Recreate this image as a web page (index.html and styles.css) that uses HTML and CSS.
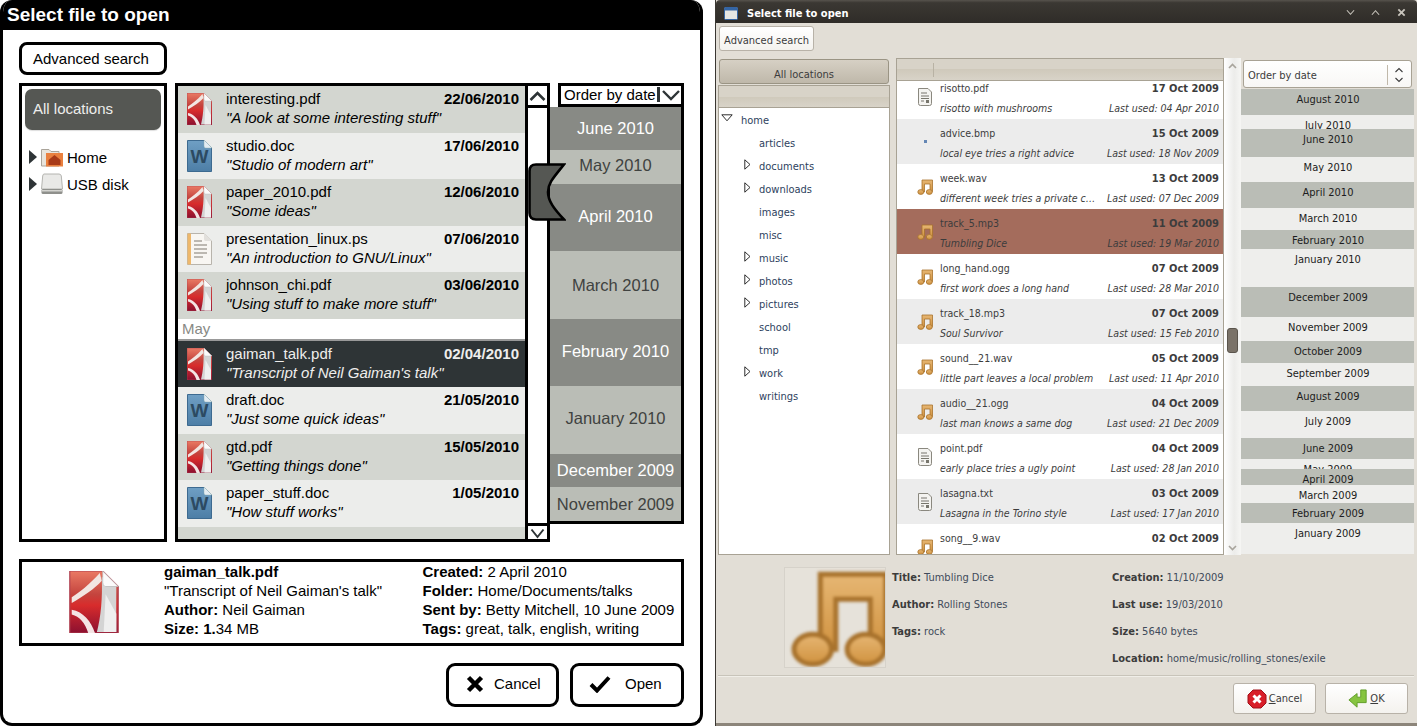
FILE: index.html
```html
<!DOCTYPE html>
<html lang="en">
<head>
<meta charset="utf-8">
<title>Select file to open</title>
<link rel="stylesheet" href="styles.css">
</head>
<body>
<svg class="defs" aria-hidden="true">
  <defs>
    <linearGradient id="g-red" x1="0" y1="0" x2="0" y2="1"><stop offset="0" stop-color="#ea7a64"/><stop offset=".38" stop-color="#c4443e"/><stop offset=".55" stop-color="#d82c2c"/><stop offset="1" stop-color="#8c1030"/></linearGradient>
    <linearGradient id="g-blue" x1="0" y1="0" x2="0" y2="1"><stop offset="0" stop-color="#6f9fc4"/><stop offset="1" stop-color="#4d7ea6"/></linearGradient>
    <linearGradient id="g-note" x1="0" y1="0" x2="0" y2="1"><stop offset="0" stop-color="#e6b673"/><stop offset="1" stop-color="#d0923f"/></linearGradient>
    <symbol id="pdf" viewBox="0 0 25 32">
      <path d="M0 0H17L25 8V32H0Z" fill="url(#g-red)" stroke="#b04050" stroke-width=".6"/>
      <path d="M15.500 1C10 7 5 11 1 13.500V16.500C7 13 13 9 16.500 5Z" fill="#f2e6e2"/>
      <path d="M1 20C7 21 11 26 13 32H9.500C8 27 5 23.500 1 22.500Z" fill="#f4e4e4"/>
      <path d="M16.500 3L24 8V31.500H14C16 24 17 14 16.500 3Z" fill="#d4d4d4"/>
      <path d="M18.500 12L24 22V31.500H17.500Z" fill="#efefef"/>
      <path d="M17 0L25 8H18.500Q17 8 17 6Z" fill="#fbfbfb" stroke="#bbb" stroke-width=".4"/>
    </symbol>
    <symbol id="doc" viewBox="0 0 25 32">
      <path d="M.5.500H17L24.500 8V31.500H.5Z" fill="url(#g-blue)" stroke="#3d6a90"/>
      <path d="M17 0L25 8H18.500Q17 8 17 6Z" fill="#e4edf3" stroke="#8aa" stroke-width=".4"/>
      <text x="12.500" y="23" class="doc-w">W</text>
    </symbol>
    <symbol id="ps" viewBox="0 0 25 32">
      <path d="M.5.500H17L24.500 8V31.500H.5Z" fill="#f8f6f2" stroke="#b8b4ac"/>
      <path d="M.5.500H4V31.500H.5Z" fill="#eeb86c"/>
      <path d="M7 8H15M7 12H20M7 16H20M7 20H20M7 24H16" stroke="#a8a49c" stroke-width="1.300"/>
      <path d="M17 0L25 8H18.500Q17 8 17 6Z" fill="#e2e0dc"/>
    </symbol>
    <symbol id="note" viewBox="0 0 16 16">
      <path d="M5 1H15.500V12.500H13V5H7.500V13H5Z" fill="url(#g-note)" stroke="#a8722c" stroke-width=".8"/>
      <ellipse cx="3.800" cy="13" rx="3" ry="2.400" fill="url(#g-note)" stroke="#a8722c" stroke-width=".8"/>
      <ellipse cx="12.300" cy="13" rx="3" ry="2.400" fill="url(#g-note)" stroke="#a8722c" stroke-width=".8"/>
    </symbol>
    <symbol id="txt" viewBox="0 0 16 18">
      <path d="M1.500.5H11L14.500 4V15.500Q14.500 17.500 12.500 17.500H3.500Q1.500 17.500 1.500 15.500Z" fill="#f4f3f0" stroke="#8a887f"/>
      <path d="M4 5H10M4 8H12M4 10.500H12M4 13H7" stroke="#77756c" stroke-width="1.100"/>
      <path d="M9 12H12V15H9Z" fill="#77756c"/>
    </symbol>
  </defs>
</svg>
<main class="desk">

  <section class="mock">
    <header class="mock-title">Select file to open</header>
    <div class="mock-body">
      <button class="mock-adv">Advanced search</button>
      <div class="mock-main">
        <aside class="mock-places">
          <div class="mock-all">All locations</div>
          <div class="mock-tree">
            <div class="mock-node">
              <i class="tri"></i>
              <svg class="node-icon" viewBox="0 0 22 20"><path d="M.5 2.500H8L10 4.500H18V19H.5Z" fill="#e8e4dc" stroke="#aaa49a"/><rect x="5" y="6" width="17" height="13.500" fill="#e9803f"/><path d="M7.500 13L13.500 8L19.500 13V18H7.500Z" fill="#a83a18"/></svg>
              <span>Home</span>
            </div>
            <div class="mock-node">
              <i class="tri"></i>
              <svg class="node-icon" viewBox="0 0 22 22"><path d="M3 1H18Q20 1 20.300 3L21.500 16H.5L1.700 3Q2 1 3 1Z" fill="#e9e9e7" stroke="#b4b4b0"/><rect x=".5" y="16" width="21" height="5" rx="1.500" fill="#8f908c"/><rect x="1" y="17" width="20" height="1.500" fill="#d4d4d0"/></svg>
              <span>USB disk</span>
            </div>
          </div>
        </aside>

        <div class="mock-files">
          <div class="mock-list">
            <div class="frow odd"><svg class="ficon"><use href="#pdf"/></svg><div class="ftext"><div class="fline"><span>interesting.pdf</span><b>22/06/2010</b></div><em>"A look at some interesting stuff"</em></div></div>
            <div class="frow even"><svg class="ficon"><use href="#doc"/></svg><div class="ftext"><div class="fline"><span>studio.doc</span><b>17/06/2010</b></div><em>"Studio of modern art"</em></div></div>
            <div class="frow odd"><svg class="ficon"><use href="#pdf"/></svg><div class="ftext"><div class="fline"><span>paper_2010.pdf</span><b>12/06/2010</b></div><em>"Some ideas"</em></div></div>
            <div class="frow even"><svg class="ficon"><use href="#ps"/></svg><div class="ftext"><div class="fline"><span>presentation_linux.ps</span><b>07/06/2010</b></div><em>"An introduction to GNU/Linux"</em></div></div>
            <div class="frow odd"><svg class="ficon"><use href="#pdf"/></svg><div class="ftext"><div class="fline"><span>johnson_chi.pdf</span><b>03/06/2010</b></div><em>"Using stuff to make more stuff"</em></div></div>
            <div class="fhead">May</div>
            <div class="frow sel"><svg class="ficon"><use href="#pdf"/></svg><div class="ftext"><div class="fline"><span>gaiman_talk.pdf</span><b>02/04/2010</b></div><em>"Transcript of Neil Gaiman's talk"</em></div></div>
            <div class="frow even"><svg class="ficon"><use href="#doc"/></svg><div class="ftext"><div class="fline"><span>draft.doc</span><b>21/05/2010</b></div><em>"Just some quick ideas"</em></div></div>
            <div class="frow odd"><svg class="ficon"><use href="#pdf"/></svg><div class="ftext"><div class="fline"><span>gtd.pdf</span><b>15/05/2010</b></div><em>"Getting things done"</em></div></div>
            <div class="frow even"><svg class="ficon"><use href="#doc"/></svg><div class="ftext"><div class="fline"><span>paper_stuff.doc</span><b>1/05/2010</b></div><em>"How stuff works"</em></div></div>
            <div class="ffill"></div>
          </div>
          <div class="mock-scroll">
            <div class="mock-arrow top"><svg viewBox="0 0 19 12"><path d="M2.500 10L9.500 3L16.500 10" fill="none" stroke="#2e3436" stroke-width="2.600"/></svg></div>
            <div class="mock-track"></div>
            <div class="mock-arrow bottom"><svg viewBox="0 0 19 12"><path d="M3.500 2.500L9.500 10L15.500 2.500" fill="none" stroke="#2e3436" stroke-width="2"/></svg></div>
          </div>
          <svg class="mock-handle" viewBox="0 0 38 58"><path d="M8 1.500H36C26 14 20 20 20 29C20 38 26 46 36 56.500H8Q1.500 56.500 1.500 50V8Q1.500 1.500 8 1.500Z" fill="#555753" stroke="#000" stroke-width="2.600"/></svg>
        </div>

        <div class="mock-dates">
          <div class="mock-sort"><span>Order by date</span><i class="sort-bar"></i><svg viewBox="0 0 20 12"><path d="M2 2L10 10L18 2" fill="none" stroke="#2e3436" stroke-width="2.400"/></svg></div>
          <div class="mock-months">
            <div class="mband dark" style="height:43px">June 2010</div>
            <div class="mband light up" style="height:34px">May 2010</div>
            <div class="mband dark up-sm" style="height:67px">April 2010</div>
            <div class="mband light" style="height:68px">March 2010</div>
            <div class="mband dark up-sm" style="height:67px">February 2010</div>
            <div class="mband light up" style="height:68px">January 2010</div>
            <div class="mband dark" style="height:33px">December 2009</div>
            <div class="mband light" style="height:34px">November 2009</div>
          </div>
        </div>
      </div>

      <div class="mock-detail">
        <svg class="detail-icon"><use href="#pdf"/></svg>
        <div class="detail-col one">
          <p><b>gaiman_talk.pdf</b></p>
          <p>"Transcript of Neil Gaiman's talk"</p>
          <p><b>Author:</b> Neil Gaiman</p>
          <p><b>Size: 1.</b>34 MB</p>
        </div>
        <div class="detail-col">
          <p><b>Created:</b> 2 April 2010</p>
          <p><b>Folder:</b> Home/Documents/talks</p>
          <p><b>Sent by:</b> Betty Mitchell, 10 June 2009</p>
          <p><b>Tags:</b> great, talk, english, writing</p>
        </div>
      </div>

      <div class="mock-actions">
        <button class="mock-btn cancel"><svg viewBox="0 0 18 18"><path d="M2.500 2.500L15.500 15.500M15.500 2.500L2.500 15.500" stroke="#000" stroke-width="4.500"/></svg><span>Cancel</span></button>
        <button class="mock-btn open"><svg viewBox="0 0 22 18"><path d="M2 9.500L8 15.500L20 2.500" fill="none" stroke="#000" stroke-width="4"/></svg><span>Open</span></button>
      </div>
    </div>
  </section>

  <section class="gtk">
    <header class="gtk-title">
      <svg class="gtk-appicon" viewBox="0 0 14 13"><rect x=".5" y=".5" width="13" height="12" rx="1" fill="#e6e6e2" stroke="#3465a4"/><rect x=".5" y=".5" width="13" height="3" fill="#3465a4"/></svg>
      <span class="gtk-caption">Select file to open</span>
      <div class="gtk-controls">
        <svg viewBox="0 0 10 7"><path d="M1 1L5 5.500L9 1" fill="none" stroke="#c8c4bc" stroke-width="1.200"/></svg>
        <svg viewBox="0 0 10 7"><path d="M1 6L5 1.500L9 6" fill="none" stroke="#c8c4bc" stroke-width="1.200"/></svg>
        <svg viewBox="0 0 10 10"><path d="M1.500 1.500L8.500 8.500M8.500 1.500L1.500 8.500" stroke="#c8c4bc" stroke-width="2"/></svg>
      </div>
    </header>
    <div class="gtk-body">
      <button class="gtk-adv">Advanced search</button>
      <div class="gtk-main">
        <aside class="gtk-places">
          <div class="gtk-all">All locations</div>
          <div class="gtk-tree">
            <div class="gtk-colhead"></div>
            <div class="tnode root"><svg viewBox="0 0 12 8"><path d="M.8.800H11.200L6 6.800Z" fill="none" stroke="#2e2e2e"/></svg>home</div>
            <div class="tnode">articles</div>
            <div class="tnode"><svg viewBox="0 0 7 11"><path d="M.8.800L6 5.500L.8 10.200Z" fill="none" stroke="#2e2e2e"/></svg>documents</div>
            <div class="tnode"><svg viewBox="0 0 7 11"><path d="M.8.800L6 5.500L.8 10.200Z" fill="none" stroke="#2e2e2e"/></svg>downloads</div>
            <div class="tnode">images</div>
            <div class="tnode">misc</div>
            <div class="tnode"><svg viewBox="0 0 7 11"><path d="M.8.800L6 5.500L.8 10.200Z" fill="none" stroke="#2e2e2e"/></svg>music</div>
            <div class="tnode"><svg viewBox="0 0 7 11"><path d="M.8.800L6 5.500L.8 10.200Z" fill="none" stroke="#2e2e2e"/></svg>photos</div>
            <div class="tnode"><svg viewBox="0 0 7 11"><path d="M.8.800L6 5.500L.8 10.200Z" fill="none" stroke="#2e2e2e"/></svg>pictures</div>
            <div class="tnode">school</div>
            <div class="tnode">tmp</div>
            <div class="tnode"><svg viewBox="0 0 7 11"><path d="M.8.800L6 5.500L.8 10.200Z" fill="none" stroke="#2e2e2e"/></svg>work</div>
            <div class="tnode">writings</div>
          </div>
        </aside>

        <div class="gtk-files">
          <div class="gtk-colhead files"><i></i></div>
          <div class="gtk-list">
            <div class="grow"><svg class="gicon doc"><use href="#txt"/></svg><span class="gname">risotto.pdf</span><b>17 Oct 2009</b><em class="gsub">risotto with mushrooms</em><em class="gused">Last used: 04 Apr 2010</em></div>
            <div class="grow alt"><span class="gicon bmp"><i></i></span><span class="gname">advice.bmp</span><b>15 Oct 2009</b><em class="gsub">local eye tries a right advice</em><em class="gused">Last used: 18 Nov 2009</em></div>
            <div class="grow"><svg class="gicon"><use href="#note"/></svg><span class="gname">week.wav</span><b>13 Oct 2009</b><em class="gsub">different week tries a private c…</em><em class="gused">Last used: 07 Dec 2009</em></div>
            <div class="grow picked"><svg class="gicon"><use href="#note"/></svg><span class="gname">track_5.mp3</span><b>11 Oct 2009</b><em class="gsub">Tumbling Dice</em><em class="gused">Last used: 19 Mar 2010</em></div>
            <div class="grow"><svg class="gicon"><use href="#note"/></svg><span class="gname">long_hand.ogg</span><b>07 Oct 2009</b><em class="gsub">first work does a long hand</em><em class="gused">Last used: 28 Mar 2010</em></div>
            <div class="grow alt"><svg class="gicon"><use href="#note"/></svg><span class="gname">track_18.mp3</span><b>07 Oct 2009</b><em class="gsub">Soul Survivor</em><em class="gused">Last used: 15 Feb 2010</em></div>
            <div class="grow"><svg class="gicon"><use href="#note"/></svg><span class="gname">sound__21.wav</span><b>05 Oct 2009</b><em class="gsub">little part leaves a local problem</em><em class="gused">Last used: 11 Apr 2010</em></div>
            <div class="grow alt"><svg class="gicon"><use href="#note"/></svg><span class="gname">audio__21.ogg</span><b>04 Oct 2009</b><em class="gsub">last man knows a same dog</em><em class="gused">Last used: 21 Dec 2009</em></div>
            <div class="grow"><svg class="gicon doc"><use href="#txt"/></svg><span class="gname">point.pdf</span><b>04 Oct 2009</b><em class="gsub">early place tries a ugly point</em><em class="gused">Last used: 28 Jan 2010</em></div>
            <div class="grow alt"><svg class="gicon doc"><use href="#txt"/></svg><span class="gname">lasagna.txt</span><b>03 Oct 2009</b><em class="gsub">Lasagna in the Torino style</em><em class="gused">Last used: 17 Jan 2010</em></div>
            <div class="grow"><svg class="gicon"><use href="#note"/></svg><span class="gname">song__9.wav</span><b>02 Oct 2009</b></div>
          </div>
        </div>

        <div class="gtk-scroll">
          <svg viewBox="0 0 9 6"><path d="M1 5L4.500 1.500L8 5" fill="none" stroke="#a8a49c" stroke-width="1.600"/></svg>
          <div class="gtk-track"><div class="gtk-thumb"></div></div>
          <svg viewBox="0 0 9 6"><path d="M1 1L4.500 4.500L8 1" fill="none" stroke="#a8a49c" stroke-width="1.600"/></svg>
        </div>

        <div class="gtk-dates">
          <div class="gtk-combo"><span>Order by date</span><i></i><svg viewBox="0 0 10 16"><path d="M1.500 5L5 1.500L8.500 5M1.500 11L5 14.500L8.500 11" fill="none" stroke="#3c3c3c" stroke-width="1.100"/></svg></div>
          <div class="gtk-months">
            <div class="gband dk" style="height:26px">August 2010</div>
            <div class="gband lt" style="height:14px">July 2010</div>
            <div class="gband dk" style="height:28px">June 2010</div>
            <div class="gband lt" style="height:25px">May 2010</div>
            <div class="gband dk" style="height:26px">April 2010</div>
            <div class="gband lt" style="height:22px">March 2010</div>
            <div class="gband dk" style="height:19px">February 2010</div>
            <div class="gband lt" style="height:38px">January 2010</div>
            <div class="gband dk" style="height:30px">December 2009</div>
            <div class="gband lt" style="height:24px">November 2009</div>
            <div class="gband dk" style="height:22px">October 2009</div>
            <div class="gband lt" style="height:23px">September 2009</div>
            <div class="gband dk" style="height:25px">August 2009</div>
            <div class="gband lt" style="height:27px">July 2009</div>
            <div class="gband dk" style="height:21px">June 2009</div>
            <div class="gband lt" style="height:10px">May 2009</div>
            <div class="gband dk" style="height:16px">April 2009</div>
            <div class="gband lt" style="height:18px">March 2009</div>
            <div class="gband dk" style="height:20px">February 2009</div>
            <div class="gband lt" style="height:31px">January 2009</div>
          </div>
        </div>
      </div>

      <div class="gtk-detail">
        <div class="gtk-thumbnail"><svg><use href="#note"/></svg></div>
        <div class="gtk-info first">
          <p><b>Title:</b> Tumbling Dice</p>
          <p><b>Author:</b> Rolling Stones</p>
          <p><b>Tags:</b> rock</p>
        </div>
        <div class="gtk-info">
          <p><b>Creation:</b> 11/10/2009</p>
          <p><b>Last use:</b> 19/03/2010</p>
          <p><b>Size:</b> 5640 bytes</p>
          <p><b>Location:</b> home/music/rolling_stones/exile</p>
        </div>
      </div>

      <div class="gtk-actions">
        <button class="gtk-btn"><svg viewBox="0 0 20 20"><path d="M6 1H14L19 6V14L14 19H6L1 14V6Z" fill="#d81e28" stroke="#a01018"/><path d="M6.500 6.500L13.500 13.500M13.500 6.500L6.500 13.500" stroke="#fff" stroke-width="3"/></svg><span><u>C</u>ancel</span></button>
        <button class="gtk-btn"><svg viewBox="0 0 22 22"><path d="M20 1V15H10V20L1 12L10 5V9H14V1Z" fill="#86c440" stroke="#5e9a26"/></svg><span><u>O</u>K</span></button>
      </div>
    </div>
    <div class="gtk-edge"></div>
  </section>
</main>
</body>
</html>
```
FILE: styles.css
```css
* { box-sizing: border-box; }
html, body { margin: 0; height: 726px; overflow: hidden; background: #fff; }
.defs { display: block; width: 0; height: 0; }
.doc-w { font: bold 19px "Liberation Sans", sans-serif; fill: #2c4a62; text-anchor: middle; }
.desk { display: flex; gap: 12px; width: 1417px; height: 726px; }
button { padding: 0; margin: 0; cursor: default; }
p { margin: 0; }

/* wireframe window */
.mock {
  width: 703px; height: 726px; flex: none; display: flex; flex-direction: column;
  border: 3px solid #000; border-top: 0; border-radius: 12px; overflow: hidden;
  font: 15px "Liberation Sans", Arial, sans-serif; color: #000; background: #fff;
}
.mock-title {
  height: 30px; flex: none; background: #000; color: #fff; font-weight: bold; font-size: 19px;
  line-height: 29px; padding-left: 4px;
}
.mock-body { padding: 12px 16px 0; display: flex; flex-direction: column; }
.mock-adv {
  width: 148px; height: 33px; background: #fff; border: 3px solid #000; border-radius: 8px; text-align: left; padding-left: 11px;
  font: 15px "Liberation Sans", Arial, sans-serif; color: #000;
}
.mock-main { display: flex; margin-top: 8px; height: 459px; }
.mock-places { width: 148px; flex: none; border: 3px solid #000; padding: 3px; margin-right: 8px; }
.mock-all {
  height: 41px; background: #555753; color: #eeeeec; border-radius: 7px; line-height: 39px; padding-left: 8px;
  box-shadow: 0 1px 1px #ddd;
}
.mock-tree { margin-top: 16px; padding-left: 4px; display: flex; flex-direction: column; gap: 5px; }
.mock-node { display: flex; align-items: center; height: 22px; }
.mock-node span { margin-left: 4px; }
.tri { width: 0; height: 0; border-left: 8px solid #2e3436; border-top: 7.500px solid transparent; border-bottom: 7.500px solid transparent; margin-right: 4px; }
.node-icon { width: 22px; height: 22px; }

.mock-files { position: relative; width: 375px; flex: none; display: flex; border: 3px solid #000; }
.mock-list { width: 347px; flex: none; display: flex; flex-direction: column; }
.frow { height: 46.500px; flex: none; display: flex; padding: 7px 6px 0 9px; }
.odd { background: #d3d6d0; }
.even { background: #ecedeb; }
.sel { background: #2e3436; color: #eeeeec; }
.ficon { width: 25px; height: 32px; flex: none; }
.ftext { margin-left: 14px; flex: 1; line-height: 19px; margin-top: -4px; }
.fline { display: flex; justify-content: space-between; }
.ftext em { display: block; }
.fhead {
  height: 22px; flex: none; background: #fff; color: #888a85; padding-left: 4px; line-height: 20px;
  border-bottom: 2px solid #999;
}
.ffill { flex: 1; background: #d3d6d0; }
.mock-scroll { width: 22px; flex: none; border-left: 3px solid #000; display: flex; flex-direction: column; }
.mock-arrow { height: 22px; flex: none; display: flex; align-items: center; }
.mock-arrow svg { width: 19px; height: 12px; }
.mock-arrow.top { border-bottom: 3px solid #000; }
.mock-arrow.bottom { height: 16px; border-top: 3px solid #000; }
.mock-track { flex: 1; }
.mock-handle { position: absolute; left: 350px; top: 77px; width: 38px; height: 58px; }

.mock-dates { flex: 1; display: flex; flex-direction: column; }
.mock-sort {
  height: 24px; flex: none; margin-left: 8px; border: 3px solid #000; display: flex; align-items: center;
  padding: 0 0 1px 3px; background: #fff; position: relative; z-index: 1;
}
.mock-sort span { width: 93px; white-space: nowrap; }
.sort-bar { width: 3px; height: 15px; background: #2e3436; margin-right: 1px; }
.mock-sort svg { width: 20px; height: 12px; }
.mock-months { width: 134px; border: 3px solid #000; border-left: 0; border-top: 0; }
.mband { display: flex; align-items: center; justify-content: center; font-size: 16.500px; }
.mband.up { padding-bottom: 4px; }
.mband.up-sm { padding-bottom: 2px; }
.dark { background: #888a85; color: #fff; }
.light { background: #babdb6; color: #3f4240; }
.mock-detail {
  margin-top: 17px; height: 87px; border: 3px solid #000; display: flex; line-height: 19px;
}
.detail-icon { width: 52px; height: 62px; margin: 9px 44px 0 46px; flex: none; }
.detail-col { width: 259px; white-space: nowrap; }
.mock-actions { display: flex; justify-content: flex-end; gap: 11px; margin-top: 17px; }
.mock-btn {
  width: 113px; height: 44px; display: flex; align-items: center; background: #fff; border: 3px solid #000; border-radius: 9px;
  font: 15px "Liberation Sans", Arial, sans-serif; color: #000; padding-bottom: 3px;
}
.mock-btn svg { height: 18px; }
.mock-btn.cancel svg { width: 18px; margin: 0 10px 0 17px; }
.mock-btn.open { width: 114px; }
.mock-btn.open svg { width: 22px; margin: 0 14px 0 16px; }

/* GTK window */
.gtk {
  width: 702px; height: 726px; flex: none; display: flex; flex-direction: column; background: #e2ded6;
  border-left: 1px solid #3a3732; font: 11px "DejaVu Sans Condensed", "DejaVu Sans", sans-serif; font-stretch: condensed;
  color: #3c3c3c; white-space: nowrap;
}
.gtk-title {
  height: 23px; flex: none; display: flex; align-items: center; color: #fff; font-weight: bold; font-size: 11px;
  background: linear-gradient(#57534d, #3b3833 12%, #2f2c28); border-radius: 4px 4px 0 0; padding: 3px 0 0 8px;
}
.gtk-appicon { width: 14px; height: 13px; margin-right: 9px; }
.gtk-caption { flex: 1; }
.gtk-controls { display: flex; align-items: center; gap: 16px; padding-right: 11px; margin-top: -2px; }
.gtk-controls svg { width: 9px; height: 7px; }
.gtk-controls svg:last-child { height: 9px; margin-left: 1px; }
.gtk-body { flex: 1; display: flex; flex-direction: column; padding: 3px 3px 0 2px; min-height: 0; }
.gtk-adv {
  width: 95px; height: 25px; margin-left: 1px; background: linear-gradient(#fff, #f4f2ee); border: 1px solid #b8b2a8; border-radius: 3px;
  font: inherit; font-stretch: condensed; color: #3c3c3c; white-space: nowrap; padding-top: 3px;
}
.gtk-main { display: flex; margin-top: 7px; height: 497px; }
.gtk-places { width: 172px; flex: none; display: flex; flex-direction: column; margin-right: 6px; }
.gtk-all {
  height: 25px; margin: 1px; flex: none; text-align: center; line-height: 29px;
  background: linear-gradient(#d6d0c4, #bfb8aa); border: 1px solid #9a9484; border-radius: 3px;
}
.gtk-tree { flex: 1; background: #fff; border: 1px solid #a8a294; overflow: hidden; }
.gtk-colhead { height: 22px; background: linear-gradient(#d8d3c8 50%, #cfc9bb 50%, #d8d3c8); border-bottom: 1px solid #a8a294; }
.tnode { height: 23px; position: relative; padding-left: 40px; line-height: 23px; color: #2e3f5e; }
.tnode.root { padding-left: 22px; }
.tnode svg { position: absolute; left: 25px; top: 4px; width: 7px; height: 11px; }
.tnode.root svg { left: 2px; top: 5px; width: 12px; height: 8px; }
.gtk-colhead + .tnode { margin-top: 1px; }
.gtk-files { width: 328px; flex: none; border: 1px solid #a8a294; background: #fff; display: flex; flex-direction: column; overflow: hidden; }
.gtk-colhead.files { flex: none; height: 22px; position: relative; }
.gtk-colhead.files i { position: absolute; left: 36px; top: 4px; width: 1px; height: 14px; background: #b8b2a4; }
.gtk-list { flex: 1; overflow: hidden; font-size: 10.500px; }
.grow {
  height: 45px; display: grid; grid-template-columns: 43px 1fr auto; grid-template-rows: 20px 20px; align-items: center;
  padding-top: 4px; padding-right: 4px;
}
.grow:first-child { margin-top: -7px; }
.alt { background: #ececec; }
.picked { background: #a46c5c; }
.gicon { grid-row: 1 / 3; width: 16px; height: 16px; margin-left: 20px; margin-top: -3px; }
.gicon.doc { height: 18px; }
.gicon.bmp { display: flex; align-items: center; justify-content: center; }
.gicon.bmp i { width: 3px; height: 3px; background: #6486b4; }
.grow b { text-align: right; font-size: 11px; }
.grow em { font-style: italic; }
.gused { text-align: right; }
.gtk-scroll {
  width: 17px; flex: none; display: flex; flex-direction: column; align-items: center; padding: 5px 0 4px;
  background: linear-gradient(90deg, #fff, #ececea 60%, #f6f6f4);
}
.gtk-scroll svg { width: 9px; height: 6px; flex: none; }
.gtk-track { flex: 1; display: flex; justify-content: center; padding-top: 259px; }
.gtk-thumb { width: 11px; height: 25px; background: #7a7268; border: 1px solid #5a544c; border-radius: 3px; }
.gtk-dates { width: 173px; flex: none; display: flex; flex-direction: column; }
.gtk-combo {
  height: 28px; margin: 2px 2px 1px; flex: none; display: flex; align-items: center; background: linear-gradient(#fff, #f8f7f5);
  border: 1px solid #a8a294; border-radius: 3px; padding: 2px 0 0 4px;
}
.gtk-combo span { flex: 1; }
.gtk-combo i { width: 1px; height: 20px; background: #c0b8aa; margin-right: 6px; }
.gtk-combo svg { width: 10px; height: 16px; margin-right: 7px; }
.gtk-months { display: flex; flex-direction: column; }
.gband { overflow: hidden; text-align: center; padding: 3px 0 0 1px; line-height: 15px; color: #1c1c20; flex: none; }
.dk { background: #babdb6; }
.lt { background: #eeeeec; }
.gtk-detail { display: flex; margin-top: 12px; height: 101px; padding-left: 66px; }
.gtk-thumbnail { width: 102px; height: 101px; border: 1px solid #d6d2ca; overflow: hidden; background: #e6e2da; flex: none; }
.gtk-thumbnail svg { width: 100px; height: 100px; display: block; filter: blur(1.500px); margin: 0 0 0 4px; }
.gtk-info { line-height: 27px; margin-top: -3px; color: #3f4a5a; }
.gtk-info.first { width: 220px; margin-left: 6px; }
.gtk-info b { font-weight: bold; color: #3c3c3c; }
.gtk-actions {
  margin-top: 7px; border-top: 1px solid #c8c4ba; padding: 7px 6px 0 0; display: flex; justify-content: flex-end; gap: 9px;
  box-shadow: inset 0 1px 0 #f0eee8;
}
.gtk-btn {
  width: 83px; height: 31px; display: flex; align-items: center; justify-content: center; gap: 2px;
  background: linear-gradient(#fff, #f4f2ee); border: 1px solid #b8b2a8; border-radius: 3px;
  font: inherit; font-stretch: condensed; color: #3c3c3c;
}
.gtk-btn svg { width: 20px; height: 20px; }
.gtk-edge { height: 3px; flex: none; background: #8c857a; margin-top: auto; }
```
